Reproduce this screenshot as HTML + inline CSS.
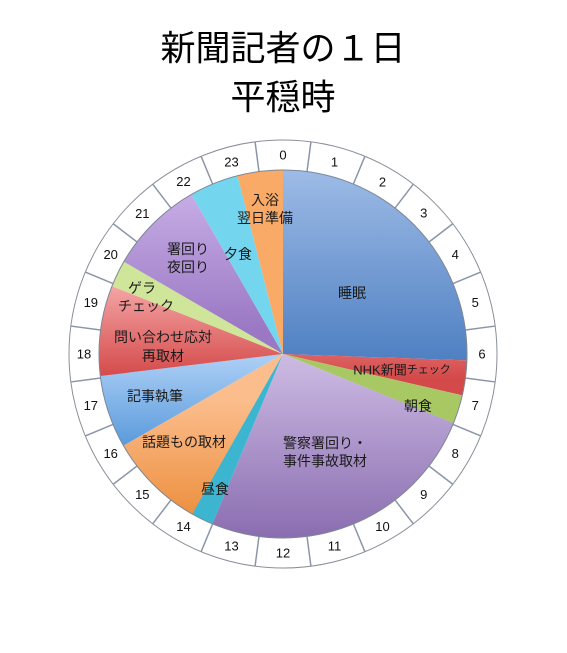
<!DOCTYPE html>
<html><head><meta charset="utf-8"><style>
html,body{margin:0;padding:0;background:#fff;}
svg{display:block}
text{font-family:"Liberation Sans","Noto Sans CJK JP",sans-serif;}
</style></head><body>
<svg width="567" height="653" viewBox="0 0 567 653" xmlns="http://www.w3.org/2000/svg">
<defs>
<linearGradient id="gB" gradientUnits="userSpaceOnUse" x1="467" y1="0" x2="277" y2="0"><stop offset="0" stop-color="#9dbbe6"/><stop offset="1" stop-color="#4f80c2"/></linearGradient>
<linearGradient id="gP" gradientUnits="userSpaceOnUse" x1="277" y1="0" x2="99" y2="0"><stop offset="0" stop-color="#cbb9e2"/><stop offset="1" stop-color="#8a6db0"/></linearGradient>
<linearGradient id="gO" gradientUnits="userSpaceOnUse" x1="237" y1="0" x2="117" y2="0"><stop offset="0" stop-color="#fbbd8c"/><stop offset="1" stop-color="#ec8e3c"/></linearGradient>
<linearGradient id="gLB" gradientUnits="userSpaceOnUse" x1="277" y1="0" x2="187" y2="0"><stop offset="0" stop-color="#a9cdf4"/><stop offset="1" stop-color="#5698db"/></linearGradient>
<linearGradient id="gR" gradientUnits="userSpaceOnUse" x1="347" y1="0" x2="259" y2="0"><stop offset="0" stop-color="#f4a4a4"/><stop offset="1" stop-color="#d44a4a"/></linearGradient>
<linearGradient id="gR2" gradientUnits="userSpaceOnUse" x1="350" y1="0" x2="260" y2="0"><stop offset="0" stop-color="#f4a4a4"/><stop offset="1" stop-color="#d44a4a"/></linearGradient>
<linearGradient id="gPu" gradientUnits="userSpaceOnUse" x1="447" y1="0" x2="307" y2="0"><stop offset="0" stop-color="#c8aee6"/><stop offset="1" stop-color="#9a78c4"/></linearGradient>
</defs>
<text x="283" y="49" font-size="35" text-anchor="middle" dominant-baseline="central" fill="#000">新聞記者の１日</text>
<text x="283" y="98" font-size="35" text-anchor="middle" dominant-baseline="central" fill="#000">平穏時</text>

<circle cx="283" cy="354" r="199" fill="none" stroke="#fff" stroke-width="30"/>
<g transform="translate(283,354)" stroke="#8a96a8" stroke-width="1.5">
<line x1="0" y1="-184" x2="0" y2="-214" transform="rotate(7.5)"/>
<line x1="0" y1="-184" x2="0" y2="-214" transform="rotate(22.5)"/>
<line x1="0" y1="-184" x2="0" y2="-214" transform="rotate(37.5)"/>
<line x1="0" y1="-184" x2="0" y2="-214" transform="rotate(52.5)"/>
<line x1="0" y1="-184" x2="0" y2="-214" transform="rotate(67.5)"/>
<line x1="0" y1="-184" x2="0" y2="-214" transform="rotate(82.5)"/>
<line x1="0" y1="-184" x2="0" y2="-214" transform="rotate(97.5)"/>
<line x1="0" y1="-184" x2="0" y2="-214" transform="rotate(112.5)"/>
<line x1="0" y1="-184" x2="0" y2="-214" transform="rotate(127.5)"/>
<line x1="0" y1="-184" x2="0" y2="-214" transform="rotate(142.5)"/>
<line x1="0" y1="-184" x2="0" y2="-214" transform="rotate(157.5)"/>
<line x1="0" y1="-184" x2="0" y2="-214" transform="rotate(172.5)"/>
<line x1="0" y1="-184" x2="0" y2="-214" transform="rotate(187.5)"/>
<line x1="0" y1="-184" x2="0" y2="-214" transform="rotate(202.5)"/>
<line x1="0" y1="-184" x2="0" y2="-214" transform="rotate(217.5)"/>
<line x1="0" y1="-184" x2="0" y2="-214" transform="rotate(232.5)"/>
<line x1="0" y1="-184" x2="0" y2="-214" transform="rotate(247.5)"/>
<line x1="0" y1="-184" x2="0" y2="-214" transform="rotate(262.5)"/>
<line x1="0" y1="-184" x2="0" y2="-214" transform="rotate(277.5)"/>
<line x1="0" y1="-184" x2="0" y2="-214" transform="rotate(292.5)"/>
<line x1="0" y1="-184" x2="0" y2="-214" transform="rotate(307.5)"/>
<line x1="0" y1="-184" x2="0" y2="-214" transform="rotate(322.5)"/>
<line x1="0" y1="-184" x2="0" y2="-214" transform="rotate(337.5)"/>
<line x1="0" y1="-184" x2="0" y2="-214" transform="rotate(352.5)"/>
</g>

<g transform="rotate(-90 283 354)" fill="none" stroke-width="184">
<circle cx="283" cy="354" r="92" stroke="url(#gB)" stroke-dasharray="147.7 578.05" stroke-dashoffset="0"/>
<circle cx="283" cy="354" r="92" stroke="url(#gR)" stroke-dasharray="17.66 578.05" stroke-dashoffset="-147.7"/>
<circle cx="283" cy="354" r="92" stroke="#a8c864" stroke-dasharray="14.45 578.05" stroke-dashoffset="-165.4"/>
<circle cx="283" cy="354" r="92" stroke="url(#gP)" stroke-dasharray="145.4 578.05" stroke-dashoffset="-179.8"/>
<circle cx="283" cy="354" r="92" stroke="#3cb6d0" stroke-dasharray="11.3 578.05" stroke-dashoffset="-325.2"/>
<circle cx="283" cy="354" r="92" stroke="url(#gO)" stroke-dasharray="49 578.05" stroke-dashoffset="-336.4"/>
<circle cx="283" cy="354" r="92" stroke="url(#gLB)" stroke-dasharray="37 578.05" stroke-dashoffset="-385.4"/>
<circle cx="283" cy="354" r="92" stroke="url(#gR2)" stroke-dasharray="45.8 578.05" stroke-dashoffset="-422.3"/>
<circle cx="283" cy="354" r="92" stroke="#cfe69a" stroke-dasharray="13.7 578.05" stroke-dashoffset="-468.1"/>
<circle cx="283" cy="354" r="92" stroke="url(#gPu)" stroke-dasharray="48.2 578.05" stroke-dashoffset="-481.7"/>
<circle cx="283" cy="354" r="92" stroke="#74d6ee" stroke-dasharray="24.9 578.05" stroke-dashoffset="-529.9"/>
<circle cx="283" cy="354" r="92" stroke="#f8aa66" stroke-dasharray="23.3 578.05" stroke-dashoffset="-554.8"/>
</g>
<circle cx="283" cy="354" r="184" fill="none" stroke="#7d8796" stroke-width="1"/>
<circle cx="283" cy="354" r="214" fill="none" stroke="#8a8f98" stroke-width="1"/>

<g font-size="13" fill="#111" text-anchor="middle" dominant-baseline="central">
<text x="283" y="155">0</text><text x="334.5" y="162">1</text><text x="382.5" y="182">2</text><text x="423.7" y="213">3</text>
<text x="455.3" y="254.5">4</text><text x="475.2" y="302.5">5</text><text x="482" y="354">6</text><text x="475.2" y="405.5">7</text>
<text x="455.3" y="453.5">8</text><text x="423.7" y="494.7">9</text><text x="382.5" y="526.3">10</text><text x="334.5" y="546">11</text>
<text x="283" y="553">12</text><text x="231.5" y="546">13</text><text x="183.5" y="526.3">14</text><text x="142.3" y="494.7">15</text>
<text x="110.7" y="453.5">16</text><text x="90.8" y="405.5">17</text><text x="84" y="354">18</text><text x="90.8" y="302.5">19</text>
<text x="110.7" y="254.5">20</text><text x="142.3" y="213.3">21</text><text x="183.5" y="181.7">22</text><text x="231.5" y="162">23</text>
</g>

<g font-size="14" fill="#1a1a1a" text-anchor="middle" dominant-baseline="central">
<text x="352" y="293">睡眠</text>
<text x="402" y="370" font-size="13">NHK新聞<tspan font-size="11">チェック</tspan></text>
<text x="418" y="406">朝食</text>
<text x="325" y="443">警察署回り・</text>
<text x="325" y="461">事件事故取材</text>
<text x="215" y="489">昼食</text>
<text x="184" y="442">話題もの取材</text>
<text x="155" y="396">記事執筆</text>
<text x="163" y="337">問い合わせ応対</text>
<text x="163" y="356">再取材</text>
<text x="142" y="288">ゲラ</text>
<text x="146" y="306">チェック</text>
<text x="188" y="249">署回り</text>
<text x="188" y="267">夜回り</text>
<text x="238" y="254">夕食</text>
<text x="265" y="200">入浴</text>
<text x="265" y="218">翌日準備</text>
</g>
</svg>
</body></html>
